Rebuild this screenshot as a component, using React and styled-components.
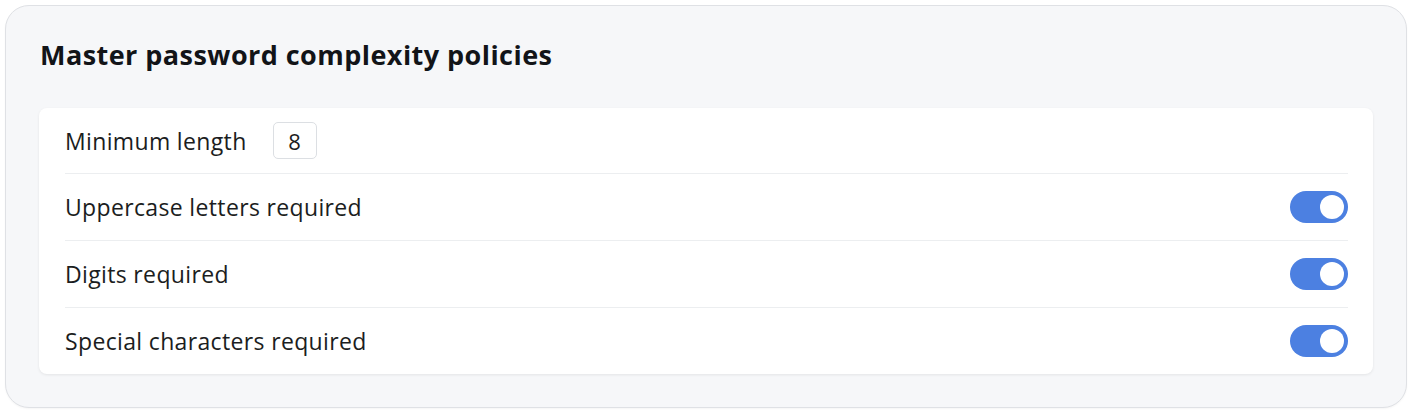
import React, { useState } from 'react';
import styled, { createGlobalStyle } from 'styled-components';

const GlobalStyle = createGlobalStyle`
    body {
        margin: 0;
        background: #ffffff;
        font-family: 'Open Sans', Lato, sans-serif;
        color: #1b1d21;
    }
`

const policies = [
    { id: 'upper', label: 'Uppercase letters required' },
    { id: 'digits', label: 'Digits required' },
    { id: 'special', label: 'Special characters required' },
]

export default function App() {
    const [state, setState] = useState({ upper: true, digits: true, special: true })

    function toggle(id) {
        setState({ ...state, [id]: !state[id] })
    }

    return (
        <>
            <GlobalStyle />
            <Page>
                <Panel>
                    <Title>Master password complexity policies</Title>
                    <Card>
                        <Row>
                            <Label>Minimum length</Label>
                            <LengthBox>8</LengthBox>
                        </Row>
                        {policies.map(p => (
                            <Row key={p.id}>
                                <Label>{p.label}</Label>
                                <Switch $on={state[p.id]} onClick={() => toggle(p.id)} aria-label={p.label} />
                            </Row>
                        ))}
                    </Card>
                </Panel>
            </Page>
        </>
    )
}

const Page = styled.div`
    padding: 5px;
`

const Panel = styled.section`
    box-sizing: border-box;
    height: 403px;
    background: #f6f7f9;
    border: 1px solid #dfe1e5;
    border-radius: 24px;
    padding: 28px 33px 0 33px;
    box-shadow: 0 1px 2px rgba(0, 0, 0, 0.04);
`

const Title = styled.h2`
    margin: 0 0 32px 1px;
    font-size: 27px;
    font-weight: 700;
    letter-spacing: 0.45px;
    line-height: 42px;
    color: #121418;
`

const Card = styled.div`
    background: #ffffff;
    border-radius: 8px;
    padding: 0 25px 0 26px;
    box-shadow: 0 1px 3px rgba(0, 0, 0, 0.08);
`

const Row = styled.div`
    display: flex;
    align-items: center;
    height: 65px;
    border-bottom: 1px solid #eceef0;
    gap: 26px;

    & + & {
        height: 66px;
    }

    &:last-child {
        border-bottom: none;
    }
`

const Label = styled.span`
    font-size: 23px;
    letter-spacing: 0.35px;
    color: #1b1d21;
    flex: 0 0 auto;
    margin-right: auto;
    &:first-child:not(:only-child) {
        margin-right: 0;
    }
`

const LengthBox = styled.div`
    box-sizing: border-box;
    width: 44px;
    height: 37px;
    border: 1px solid #dcdfe3;
    border-radius: 5px;
    display: flex;
    align-items: center;
    justify-content: center;
    font-size: 22px;
    color: #1b1d21;
`

const Switch = styled.button`
    position: relative;
    width: 58px;
    height: 32px;
    border: none;
    border-radius: 16px;
    padding: 0;
    margin-left: auto;
    cursor: pointer;
    background: ${p => p.$on ? '#4c80e1' : '#c9ced6'};

    &::after {
        content: '';
        position: absolute;
        top: 4px;
        left: ${p => p.$on ? '30px' : '4px'};
        width: 24px;
        height: 24px;
        border-radius: 50%;
        background: #ffffff;
    }
`
